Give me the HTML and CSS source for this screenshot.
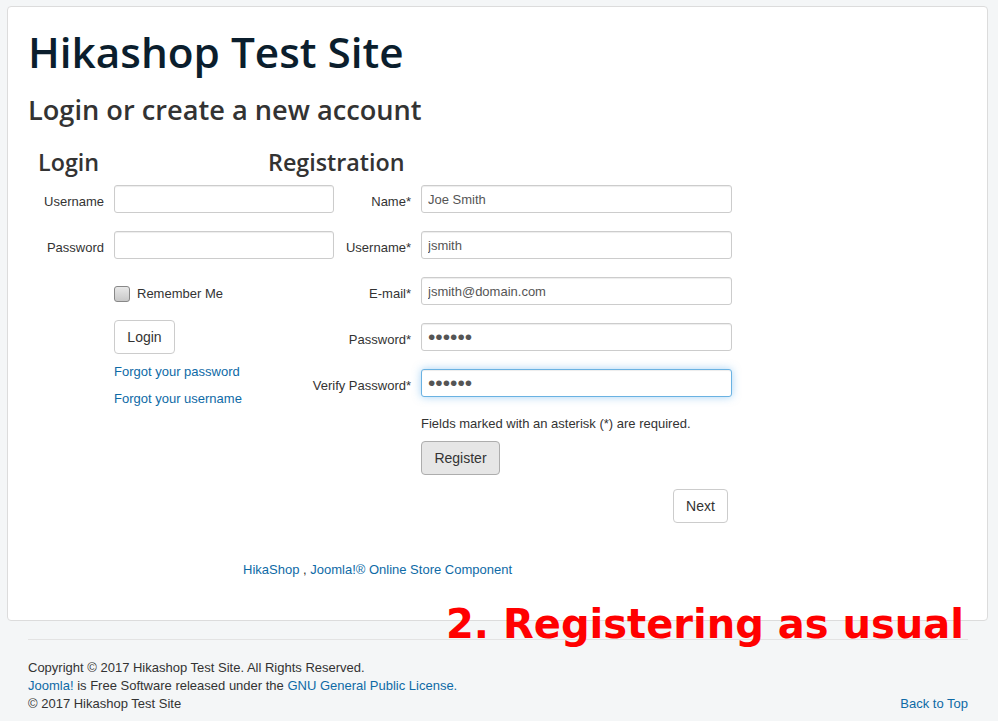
FILE: index.html
```html
<!DOCTYPE html>
<html lang="en">
<head>
  <meta charset="UTF-8">
  <meta name="viewport" content="width=device-width, initial-scale=1.0">
  <title>Hikashop Test Site</title>
  <link rel="stylesheet" href="styles.css">
</head>
<body>
  <div class="body-wrap">
    <div class="container">
      <h1 class="site-title">Hikashop Test Site</h1>
      <h2 class="page-title">Login or create a new account</h2>

      <div class="checkout-forms">
        <!-- Login column -->
        <div class="login-col">
          <h3>Login</h3>
          <div class="form-row">
            <label class="login-label">Username</label>
            <input type="text" class="field login-field">
          </div>
          <div class="form-row">
            <label class="login-label">Password</label>
            <input type="password" class="field login-field">
          </div>
          <div class="login-extra">
            <label class="remember"><span class="checkbox"></span>Remember Me</label>
            <button class="btn btn-login">Login</button>
            <a href="#" class="forgot">Forgot your password</a>
            <a href="#" class="forgot">Forgot your username</a>
          </div>
        </div>

        <!-- Registration column -->
        <div class="register-col">
          <h3>Registration</h3>
          <div class="form-row">
            <label class="reg-label">Name*</label>
            <input type="text" class="field reg-field" value="Joe Smith">
          </div>
          <div class="form-row">
            <label class="reg-label">Username*</label>
            <input type="text" class="field reg-field" value="jsmith">
          </div>
          <div class="form-row">
            <label class="reg-label">E-mail*</label>
            <input type="text" class="field reg-field" value="jsmith@domain.com">
          </div>
          <div class="form-row">
            <label class="reg-label">Password*</label>
            <input type="password" class="field reg-field pass" value="123456">
          </div>
          <div class="form-row">
            <label class="reg-label">Verify Password*</label>
            <input type="password" class="field reg-field pass focused" value="123456">
          </div>
          <div class="reg-extra">
            <p class="required-note">Fields marked with an asterisk (*) are required.</p>
            <button class="btn btn-register">Register</button>
          </div>
          <div class="next-row">
            <button class="btn btn-next">Next</button>
          </div>
        </div>
      </div>

      <div class="powered">
        <a href="#">HikaShop</a> , <a href="#">Joomla!® Online Store Component</a>
      </div>
    </div>

    <div class="annotation">2. Registering as usual</div>

    <footer class="footer">
      <hr>
      <div class="footer-text">
        <p>Copyright © 2017 Hikashop Test Site. All Rights Reserved.</p>
        <p><a href="#">Joomla!</a> is Free Software released under the <a href="#">GNU General Public License.</a></p>
        <div class="footer-last">
          <p>© 2017 Hikashop Test Site</p>
          <a href="#">Back to Top</a>
        </div>
      </div>
    </footer>
  </div>
</body>
</html>
```

FILE: styles.css
```css
body {
  margin: 0;
  background: #f4f6f7;
  font-family: "Liberation Sans", Arial, sans-serif;
  font-size: 13px;
  line-height: 18px;
  color: #333;
}

a {
  color: #0e6aa6;
  text-decoration: none;
}

.body-wrap {
  position: relative;
  margin: 6px 10px 0 7px;
}

.container {
  background: #fff;
  border: 1px solid #dcdcdc;
  border-radius: 4px;
  padding: 20px;
  height: 573px;
}

h1, h2, h3 {
  font-family: "Open Sans", sans-serif;
  font-weight: 600;
  margin: 0;
}

.site-title {
  font-size: 42.3px;
  line-height: 50px;
  color: #0b1e2d;
}

.page-title {
  font-size: 27.2px;
  line-height: 34px;
  margin-top: 16px;
  color: #333;
}

.checkout-forms {
  display: flex;
  margin-top: 20px;
  padding-left: 10px;
}

.checkout-forms h3 {
  font-size: 23.3px;
  line-height: 30px;
  color: #333;
  margin-bottom: 8px;
}

.login-col {
  width: 230px;
  flex-shrink: 0;
}

.register-col {
  width: 464px;
}

.form-row {
  display: flex;
  align-items: center;
  height: 28px;
  margin-bottom: 18px;
}

.form-row label {
  padding-top: 5px;
  text-align: right;
  flex-shrink: 0;
}

.login-label {
  width: 66px;
  margin-right: 10px;
}

.reg-label {
  width: 143px;
  margin-right: 10px;
}

.field {
  box-sizing: border-box;
  flex-shrink: 0;
  height: 28px;
  padding: 4px 6px;
  border: 1px solid #ccc;
  border-radius: 3px;
  background: #fff;
  font-family: "Liberation Sans", Arial, sans-serif;
  font-size: 13px;
  color: #555;
  box-shadow: inset 0 1px 1px rgba(0, 0, 0, 0.075);
  outline: none;
}

.login-field {
  width: 220px;
}

.reg-field {
  width: 311px;
}

.field.pass {
  font-size: 21px;
  padding: 0 6px;
}

.field.focused {
  border-color: #6ab2e2;
  box-shadow: inset 0 1px 1px rgba(0, 0, 0, 0.075), 0 0 8px rgba(82, 168, 236, 0.5);
}

.login-extra {
  display: flex;
  flex-direction: column;
  align-items: flex-start;
  padding-left: 76px;
  padding-top: 9px;
}

.remember {
  display: flex;
  align-items: center;
  height: 16px;
  margin-bottom: 18px;
}

.checkbox {
  width: 14px;
  height: 14px;
  border: 1px solid #888;
  border-radius: 3px;
  background: linear-gradient(#e8e8e8, #c8c8c8);
  margin-right: 7px;
}

.btn {
  box-sizing: border-box;
  height: 34px;
  padding: 0 12px;
  border: 1px solid #ccc;
  border-radius: 4px;
  background: #fff;
  font-family: "Liberation Sans", Arial, sans-serif;
  font-size: 14px;
  color: #333;
  cursor: pointer;
}

.btn-login {
  width: 61px;
  margin-bottom: 9px;
}

.forgot {
  line-height: 18px;
  margin-bottom: 9px;
}

.reg-extra {
  padding-left: 153px;
  margin-top: 3px;
}

.required-note {
  margin: 0 0 8px;
}

.btn-register {
  width: 79px;
  background: #e6e6e6;
  border-color: #adadad;
}

.next-row {
  display: flex;
  justify-content: flex-end;
  padding-right: 4px;
  margin-top: 14px;
}

.btn-next {
  width: 55px;
}

.powered {
  margin-top: 38px;
  padding-left: 215px;
}

.annotation {
  position: absolute;
  left: 439px;
  top: 594px;
  font-family: "DejaVu Sans", sans-serif;
  font-weight: bold;
  font-size: 40px;
  line-height: 48px;
  color: #ff0000;
}

.footer {
  padding: 0 20px 0 21px;
}

.footer hr {
  margin: 18px 0 0;
  border: 0;
  border-top: 1px solid #e3e3e3;
}

.footer-text {
  padding-top: 19px;
}

.footer-text p {
  margin: 0;
}

.footer-last {
  display: flex;
  justify-content: space-between;
}
```
